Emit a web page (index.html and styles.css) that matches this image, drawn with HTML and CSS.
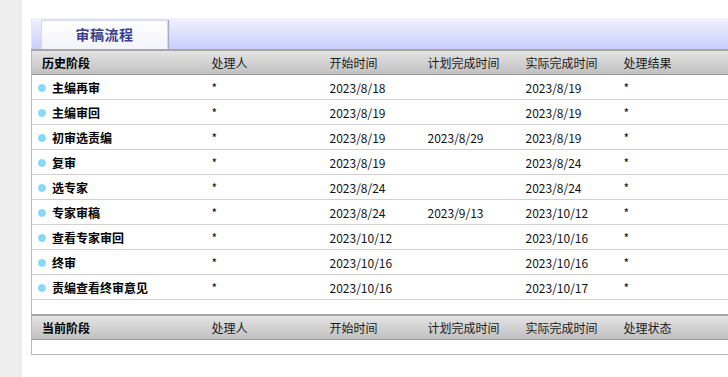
FILE: index.html
```html
<!DOCTYPE html>
<html>
<head>
<meta charset="utf-8">
<link rel="stylesheet" href="styles.css">
</head>
<body>
<div class="side"></div>
<div class="main">
  <div class="tabbar"><div class="tab">审稿流程</div></div>
  <table class="grid">
    <colgroup>
      <col class="c1"><col class="c2"><col class="c3"><col class="c4"><col class="c5"><col class="c6">
    </colgroup>
    <thead>
      <tr class="head"><th class="first">历史阶段</th><th>处理人</th><th>开始时间</th><th>计划完成时间</th><th>实际完成时间</th><th>处理结果</th></tr>
    </thead>
    <tbody>
      <tr><td class="name"><span class="dot"></span>主编再审</td><td>*</td><td>2023/8/18</td><td></td><td>2023/8/19</td><td>*</td></tr>
      <tr><td class="name"><span class="dot"></span>主编审回</td><td>*</td><td>2023/8/19</td><td></td><td>2023/8/19</td><td>*</td></tr>
      <tr><td class="name"><span class="dot"></span>初审选责编</td><td>*</td><td>2023/8/19</td><td>2023/8/29</td><td>2023/8/19</td><td>*</td></tr>
      <tr><td class="name"><span class="dot"></span>复审</td><td>*</td><td>2023/8/19</td><td></td><td>2023/8/24</td><td>*</td></tr>
      <tr><td class="name"><span class="dot"></span>选专家</td><td>*</td><td>2023/8/24</td><td></td><td>2023/8/24</td><td>*</td></tr>
      <tr><td class="name"><span class="dot"></span>专家审稿</td><td>*</td><td>2023/8/24</td><td>2023/9/13</td><td>2023/10/12</td><td>*</td></tr>
      <tr><td class="name"><span class="dot"></span>查看专家审回</td><td>*</td><td>2023/10/12</td><td></td><td>2023/10/16</td><td>*</td></tr>
      <tr><td class="name"><span class="dot"></span>终审</td><td>*</td><td>2023/10/16</td><td></td><td>2023/10/16</td><td>*</td></tr>
      <tr><td class="name"><span class="dot"></span>责编查看终审意见</td><td>*</td><td>2023/10/16</td><td></td><td>2023/10/17</td><td>*</td></tr>
      <tr class="spacer"><td colspan="6"></td></tr>
    </tbody>
    <tbody>
      <tr class="head"><th class="first">当前阶段</th><th>处理人</th><th>开始时间</th><th>计划完成时间</th><th>实际完成时间</th><th>处理状态</th></tr>
      <tr class="spacer last"><td colspan="6"></td></tr>
    </tbody>
  </table>
</div>
</body>
</html>
```
FILE: styles.css
```css
html, body {
  margin: 0;
  padding: 0;
  height: 100%;
  overflow: hidden;
  background: #fff;
}
body {
  display: flex;
  font-family: "Noto Sans CJK SC", "Microsoft YaHei", sans-serif;
  font-size: 12px;
  color: #111;
}
.side {
  width: 22px;
  flex: none;
  background: #ededed;
}
.main {
  flex: 1;
  min-width: 0;
  padding: 18px 0 0 9px;
}
.tabbar {
  height: 31px;
  background: linear-gradient(#f1f2fd, #c8cffd);
  border-left: 1px solid #e4e6f4;
  display: flex;
  align-items: flex-end;
  padding-left: 9px;
}
.tab {
  width: 125px;
  height: 28px;
  line-height: 27px;
  text-align: center;
  background: linear-gradient(#ffffff, #f3f4fb);
  border: 1px solid #d6d9ee;
  border-bottom: none;
  box-shadow: 1px 0 1px #a9acc4;
  color: #3b3f8e;
  font-weight: bold;
  font-size: 14px;
  letter-spacing: 0.5px;
}
.grid {
  border-collapse: collapse;
  table-layout: fixed;
  width: 100%;
  border-left: 1px solid #b9b9b9;
}
.c1 { width: 170px; }
.c2 { width: 118px; }
.c3 { width: 98px; }
.c4 { width: 98px; }
.c5 { width: 98px; }
.c6 { width: auto; }
.head th {
  height: 23px;
  padding: 0 0 0 10px;
  text-align: left;
  font-weight: normal;
  color: #1a1a1a;
  background: linear-gradient(#e3e3e3, #c1c1c1);
  border-top: 2px solid #a6a6a6;
  border-bottom: 1px solid #9c9c9c;
  white-space: nowrap;
}
.head th.first {
  font-weight: bold;
  color: #000;
}
td {
  height: 24px;
  padding: 0 0 0 10px;
  border-bottom: 1px solid #cfcfcf;
  white-space: nowrap;
  color: #111;
}
td.name {
  padding-left: 6px;
  font-weight: bold;
  color: #000;
}
.dot {
  display: inline-block;
  width: 8px;
  height: 8px;
  border-radius: 50%;
  background: radial-gradient(circle at 50% 50%, #8fe0ff 0, #7fd6f7 45%, #c6eef8 100%);
  vertical-align: middle;
  margin: -2px 6px 0 0;
}
.spacer td {
  height: 14px;
  padding: 0;
  border-bottom: none;
}
.spacer.last td {
  border-bottom: 1px solid #b9b9b9;
}
```
